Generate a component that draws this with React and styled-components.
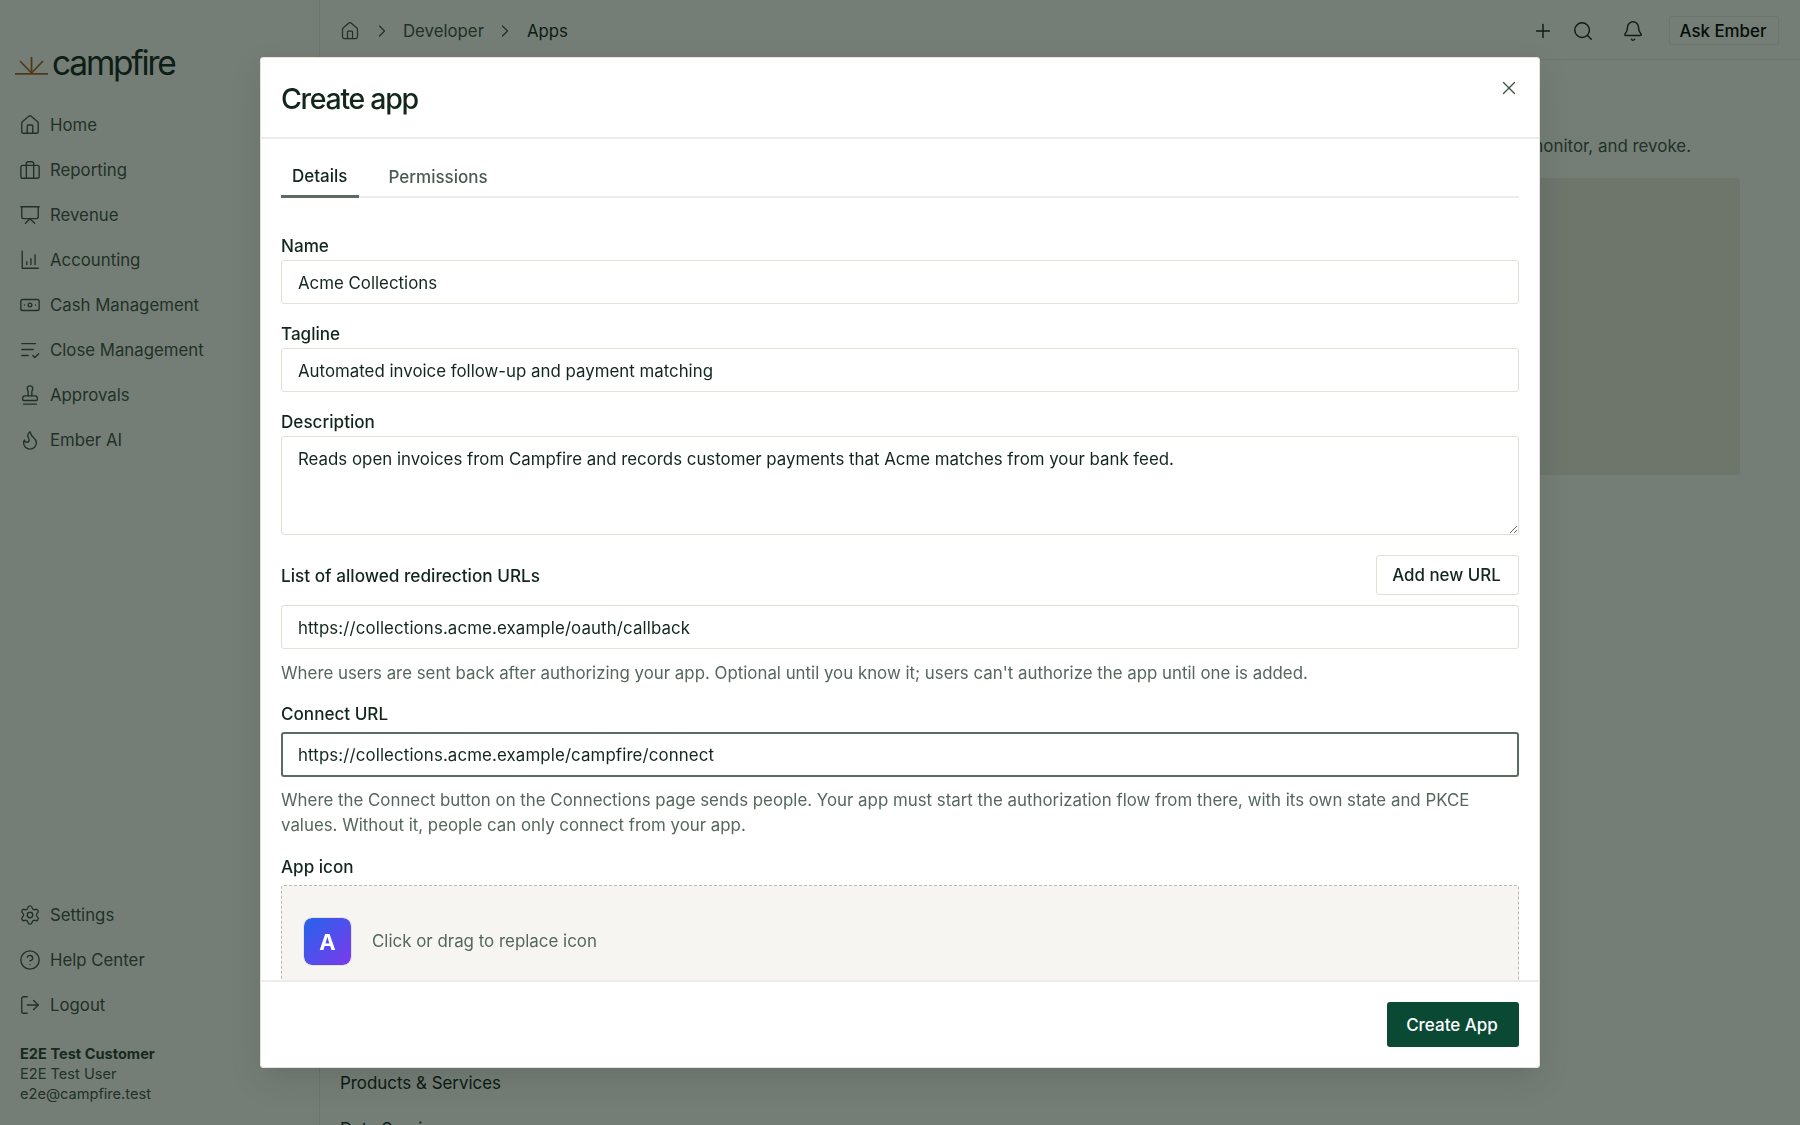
import React from 'react';
import styled, { createGlobalStyle } from 'styled-components';
import { House, Presentation, Banknote, Stamp, Flame, Settings, CircleHelp, LogOut, Plus, Search, Bell, ChevronRight, X } from 'lucide-react';

const font = '"Inter", "Liberation Sans", sans-serif';

const Global = createGlobalStyle`
  * { box-sizing: border-box; }
  html, body { margin: 0; padding: 0; height: 100%; }
  body { background: #fbfaf7; font-family: ${font}; color: #12261d; overflow: hidden; }
  #root { height: 100%; }
`;

const Shell = styled.div`
  display: flex;
  width: 1800px;
  height: 1125px;
  overflow: hidden;
  background: #fbfaf7;
`;

const Sidebar = styled.aside`
  width: 320px;
  flex: none;
  display: flex;
  flex-direction: column;
  border-right: 1px solid #e6e3dc;
  padding: 41px 0 21px 0;
`;

const LogoRow = styled.div`
  display: flex;
  align-items: flex-end;
  gap: 4px;
  padding-left: 15px;
  height: 44px;
  margin-bottom: 17px;
  svg { margin-bottom: 10px; }
`;

const LogoWord = styled.span`
  font-size: 33.5px;
  line-height: 44px;
  letter-spacing: -2.2px;
  font-weight: 400;
  color: #14291f;
`;

const NavList = styled.nav`
  display: flex;
  flex-direction: column;
`;

const NavItem = styled.a`
  display: flex;
  align-items: center;
  gap: 9px;
  height: 45px;
  padding-left: 19px;
  font-size: 16.8px;
  color: #3f5248;
  svg { flex: none; }
`;

const Spacer = styled.div`
  flex: 1;
`;

const UserBlock = styled.div`
  display: flex;
  flex-direction: column;
  margin-top: 17px;
  padding-left: 20px;
  font-size: 14.6px;
  line-height: 20px;
  color: #3f5248;
`;

const UserName = styled.strong`
  font-weight: 700;
  color: #2c3f35;
`;

const Main = styled.main`
  flex: 1;
  display: flex;
  flex-direction: column;
  min-width: 0;
`;

const TopBar = styled.header`
  height: 60px;
  flex: none;
  display: flex;
  align-items: center;
  justify-content: space-between;
  padding: 2px 21px 0 20px;
  border-bottom: 1px solid #ebe8e1;
`;

const Crumbs = styled.div`
  display: flex;
  align-items: center;
  gap: 11.5px;
  font-size: 16.8px;
  color: #3f5248;
`;

const CurrentCrumb = styled.span`
  color: #12261d;
  font-weight: 400;
`;

const TopActions = styled.div`
  display: flex;
  align-items: center;
`;

const TopIcon = styled.span`
  display: flex;
  width: ${p => p.$w}px;
  justify-content: center;
  color: #12261d;
`;

const AskButton = styled.button`
  width: 110px;
  height: 29px;
  margin-left: 6px;
  border: 1px solid #ebe8e1;
  border-radius: 2px;
  background: #fbfaf7;
  font: 500 16.9px ${font};
  color: #000;
  padding: 0 2px 0 0;
`;

const Body = styled.div`
  flex: 1;
  padding: 75px 60px 0 20px;
  display: flex;
  flex-direction: column;
`;

const Intro = styled.p`
  margin: 0;
  text-align: right;
  padding-right: 49px;
  font-size: 16.9px;
  line-height: 22px;
  color: #3f5248;
`;

const EmptyCard = styled.div`
  height: 297px;
  margin-top: 21px;
  background: #ebe9e1;
  border-radius: 3px;
  flex: none;
`;

const SectionList = styled.div`
  margin-top: 596px;
  display: flex;
  flex-direction: column;
  gap: 22px;
  font-size: 16.9px;
  line-height: 24px;
  color: #12261d;
`;

const Overlay = styled.div`
  position: fixed;
  inset: 0;
  background: rgba(8, 24, 12, 0.55);
  display: flex;
  align-items: center;
  justify-content: center;
`;

const Modal = styled.div`
  width: 1280px;
  height: 1011px;
  background: #fff;
  border: 1px solid #e6e3dc;
  border-radius: 3px;
  box-shadow: 0 12px 32px rgba(0, 0, 0, 0.12);
  display: flex;
  flex-direction: column;
  overflow: hidden;
  color: #12261d;
`;

const ModalHeader = styled.div`
  height: 81px;
  flex: none;
  display: flex;
  align-items: center;
  justify-content: space-between;
  padding: 1px 19px 0 20px;
  border-bottom: 2px solid #eeece8;
`;

const Title = styled.h2`
  margin: 0;
  font-size: 28.5px;
  font-weight: 450;
  letter-spacing: -1.3px;
  color: #12261d;
`;

const CloseBtn = styled.button`
  border: 0;
  background: none;
  padding: 0;
  display: flex;
  margin-top: -21px;
  color: #3f5248;
`;

const ModalBody = styled.div`
  flex: 1;
  min-height: 0;
  overflow: hidden;
  padding: 19px 20px 0 20px;
`;

const Tabs = styled.div`
  display: flex;
  gap: 19px;
  height: 40px;
  border-bottom: 2px solid #eeece8;
`;

const Tab = styled.div`
  height: 40px;
  padding: 0 11px 2px;
  display: flex;
  align-items: center;
  font-size: 17px;
  font-weight: 500;
  color: ${p => (p.$active ? '#12261d' : '#4a5c52')};
  border-bottom: ${p => (p.$active ? '3px solid #5a6c62' : '0')};
`;

const Form = styled.div`
  display: flex;
  flex-direction: column;
  margin-top: 37px;
`;

const Field = styled.div`
  display: flex;
  flex-direction: column;
  margin-bottom: ${p => p.$mb ?? 19}px;
`;

const Label = styled.label`
  font-size: 17.1px;
  line-height: 22px;
  font-weight: 500;
  margin-bottom: ${p => p.$gap ?? 3}px;
  color: #12261d;
`;

const Input = styled.input`
  width: 100%;
  height: ${p => (p.$focused ? 45 : 44)}px;
  padding: 1px ${p => (p.$focused ? 15 : 16)}px 0;
  border: ${p => (p.$focused ? '2px solid #5a6c62' : '1px solid #e2dfd7')};
  border-radius: 3px;
  background: #fff;
  font: 400 16.85px ${font};
  letter-spacing: ${p => (p.$url ? '0.12px' : '0')};
  color: #12261d;
  outline: 0;
`;

const Area = styled.textarea`
  width: 100%;
  height: 99px;
  padding: 11px 16px;
  border: 1px solid #e2dfd7;
  border-radius: 3px;
  background: #fff;
  font: 400 16.85px/22px ${font};
  color: #12261d;
  outline: 0;
  display: block;
`;

const RowHead = styled.div`
  display: flex;
  align-items: center;
  justify-content: space-between;
  margin-bottom: 10px;
`;

const RowLabel = styled.span`
  font-size: 17.2px;
  font-weight: 500;
`;

const GhostBtn = styled.button`
  width: 143px;
  height: 40px;
  border: 1px solid #e2dfd7;
  border-radius: 3px;
  background: #fff;
  font: 500 16.9px ${font};
  color: #12261d;
  padding: 0 2px 0 0;
`;

const Help = styled.p`
  margin: ${p => p.$top ?? 12}px 0 0;
  font-size: 16.85px;
  line-height: 25px;
  color: #55675d;
`;

const Drop = styled.div`
  display: flex;
  align-items: flex-start;
  gap: 20px;
  padding: 31px 21px;
  background: #f6f5f1;
  border: 1px dashed #b9b8b3;
  border-radius: 3px;
  height: 120px;
`;

const AppIcon = styled.div`
  width: 49px;
  height: 49px;
  flex: none;
  display: flex;
  align-items: center;
  justify-content: center;
  border: 1px solid #e6e3dc;
  border-radius: 9px;
  background: linear-gradient(135deg, #2563eb, #7c3aed);
  background-clip: padding-box;
  color: #fff;
  font-size: 22px;
  font-weight: 700;
`;

const DropText = styled.span`
  font-size: 16.9px;
  line-height: 49px;
  color: #55675d;
`;

const ModalFooter = styled.div`
  height: 87px;
  flex: none;
  display: flex;
  align-items: center;
  justify-content: flex-end;
  padding: 0 20px 0 0;
  border-top: 2px solid #eeece8;
`;

const PrimaryBtn = styled.button`
  width: 132px;
  height: 45px;
  border: 0;
  border-radius: 3px;
  background: #0a4a35;
  font: 500 17px ${font};
  color: #fff;
  padding: 0 2px 0 0;
`;

const Glyph = ({ children }) => (
  <svg width="22" height="22" viewBox="0 0 24 24" fill="none" stroke="currentColor" strokeWidth="1.5" strokeLinecap="round" strokeLinejoin="round">
    {children}
  </svg>
);

const BriefIcon = () => (
  <Glyph>
    <rect x="2" y="7" width="20" height="14" rx="2" />
    <path d="M8 21V5a2 2 0 0 1 2-2h4a2 2 0 0 1 2 2v16" />
  </Glyph>
);

const BarsIcon = () => (
  <Glyph>
    <path d="M3.5 2.5V21H21" />
    <path d="M8.5 17v-3" />
    <path d="M13 17v-6.5" />
    <path d="M17.5 17V6.5" />
  </Glyph>
);

const CloseIcon = () => (
  <Glyph>
    <path d="M3 5h15" />
    <path d="M3 11.5h12.5" />
    <path d="M3 18h7" />
    <path d="m15 18 2.2 2.2L21.5 16" />
  </Glyph>
);

const Sun = () => (
  <svg width="33" height="19" viewBox="0 0 33 19" fill="none" stroke="#a8622c" strokeWidth="1.8">
    <path d="M0 17.8h33" />
    <path d="M16.5 17V1" />
    <path d="M16.5 17 5 5" />
    <path d="M16.5 17 28 5" />
  </svg>
);

const icon = { size: 22, strokeWidth: 1.5 };

const navTop = [
  ['Home', <House {...icon} />],
  ['Reporting', <BriefIcon />],
  ['Revenue', <Presentation {...icon} />],
  ['Accounting', <BarsIcon />],
  ['Cash Management', <Banknote {...icon} />],
  ['Close Management', <CloseIcon />],
  ['Approvals', <Stamp {...icon} />],
  ['Ember AI', <Flame {...icon} />],
];

const navBottom = [
  ['Settings', <Settings {...icon} />],
  ['Help Center', <CircleHelp {...icon} />],
  ['Logout', <LogOut {...icon} />],
];

export default function App() {
  return (
    <>
      <Global />
      <Shell>
        <Sidebar>
          <LogoRow>
            <Sun />
            <LogoWord>campfire</LogoWord>
          </LogoRow>
          <NavList>
            {navTop.map(([label, ic]) => (
              <NavItem key={label}>{ic}{label}</NavItem>
            ))}
          </NavList>
          <Spacer />
          <NavList>
            {navBottom.map(([label, ic]) => (
              <NavItem key={label}>{ic}{label}</NavItem>
            ))}
          </NavList>
          <UserBlock>
            <UserName>E2E Test Customer</UserName>
            <span>E2E Test User</span>
            <span>e2e@campfire.test</span>
          </UserBlock>
        </Sidebar>
        <Main>
          <TopBar>
            <Crumbs>
              <House size={20} strokeWidth={1.5} />
              <ChevronRight size={20} strokeWidth={1.5} />
              <span>Developer</span>
              <ChevronRight size={20} strokeWidth={1.5} />
              <CurrentCrumb>Apps</CurrentCrumb>
            </Crumbs>
            <TopActions>
              <TopIcon $w={40}><Plus size={22} strokeWidth={1.6} /></TopIcon>
              <TopIcon $w={40}><Search size={22} strokeWidth={1.6} /></TopIcon>
              <TopIcon $w={60}><Bell size={22} strokeWidth={1.6} /></TopIcon>
              <AskButton>Ask Ember</AskButton>
            </TopActions>
          </TopBar>
          <Body>
            <Intro>monitor, and revoke.</Intro>
            <EmptyCard />
            <SectionList>
              <span>Products &amp; Services</span>
              <span>Data Services</span>
            </SectionList>
          </Body>
        </Main>
      </Shell>
      <Overlay>
        <Modal>
          <ModalHeader>
            <Title>Create app</Title>
            <CloseBtn aria-label="Close"><X size={22} strokeWidth={1.5} /></CloseBtn>
          </ModalHeader>
          <ModalBody>
            <Tabs>
              <Tab $active>Details</Tab>
              <Tab>Permissions</Tab>
            </Tabs>
            <Form>
              <Field>
                <Label>Name</Label>
                <Input readOnly value="Acme Collections" />
              </Field>
              <Field>
                <Label>Tagline</Label>
                <Input readOnly value="Automated invoice follow-up and payment matching" />
              </Field>
              <Field $mb={20}>
                <Label>Description</Label>
                <Area readOnly value="Reads open invoices from Campfire and records customer payments that Acme matches from your bank feed." />
              </Field>
              <RowHead>
                <RowLabel>List of allowed redirection URLs</RowLabel>
                <GhostBtn>Add new URL</GhostBtn>
              </RowHead>
              <Field $mb={17}>
                <Input $url readOnly value="https://collections.acme.example/oauth/callback" />
                <Help>Where users are sent back after authorizing your app. Optional until you know it; users can't authorize the app until one is added.</Help>
              </Field>
              <Field $mb={18}>
                <Label $gap={7}>Connect URL</Label>
                <Input $url $focused readOnly value="https://collections.acme.example/campfire/connect" />
                <Help $top={11}>Where the Connect button on the Connections page sends people. Your app must start the authorization flow from there, with its own state and PKCE values. Without it, people can only connect from your app.</Help>
              </Field>
              <Field>
                <Label $gap={7}>App icon</Label>
                <Drop>
                  <AppIcon>A</AppIcon>
                  <DropText>Click or drag to replace icon</DropText>
                </Drop>
              </Field>
            </Form>
          </ModalBody>
          <ModalFooter>
            <PrimaryBtn>Create App</PrimaryBtn>
          </ModalFooter>
        </Modal>
      </Overlay>
    </>
  );
}
